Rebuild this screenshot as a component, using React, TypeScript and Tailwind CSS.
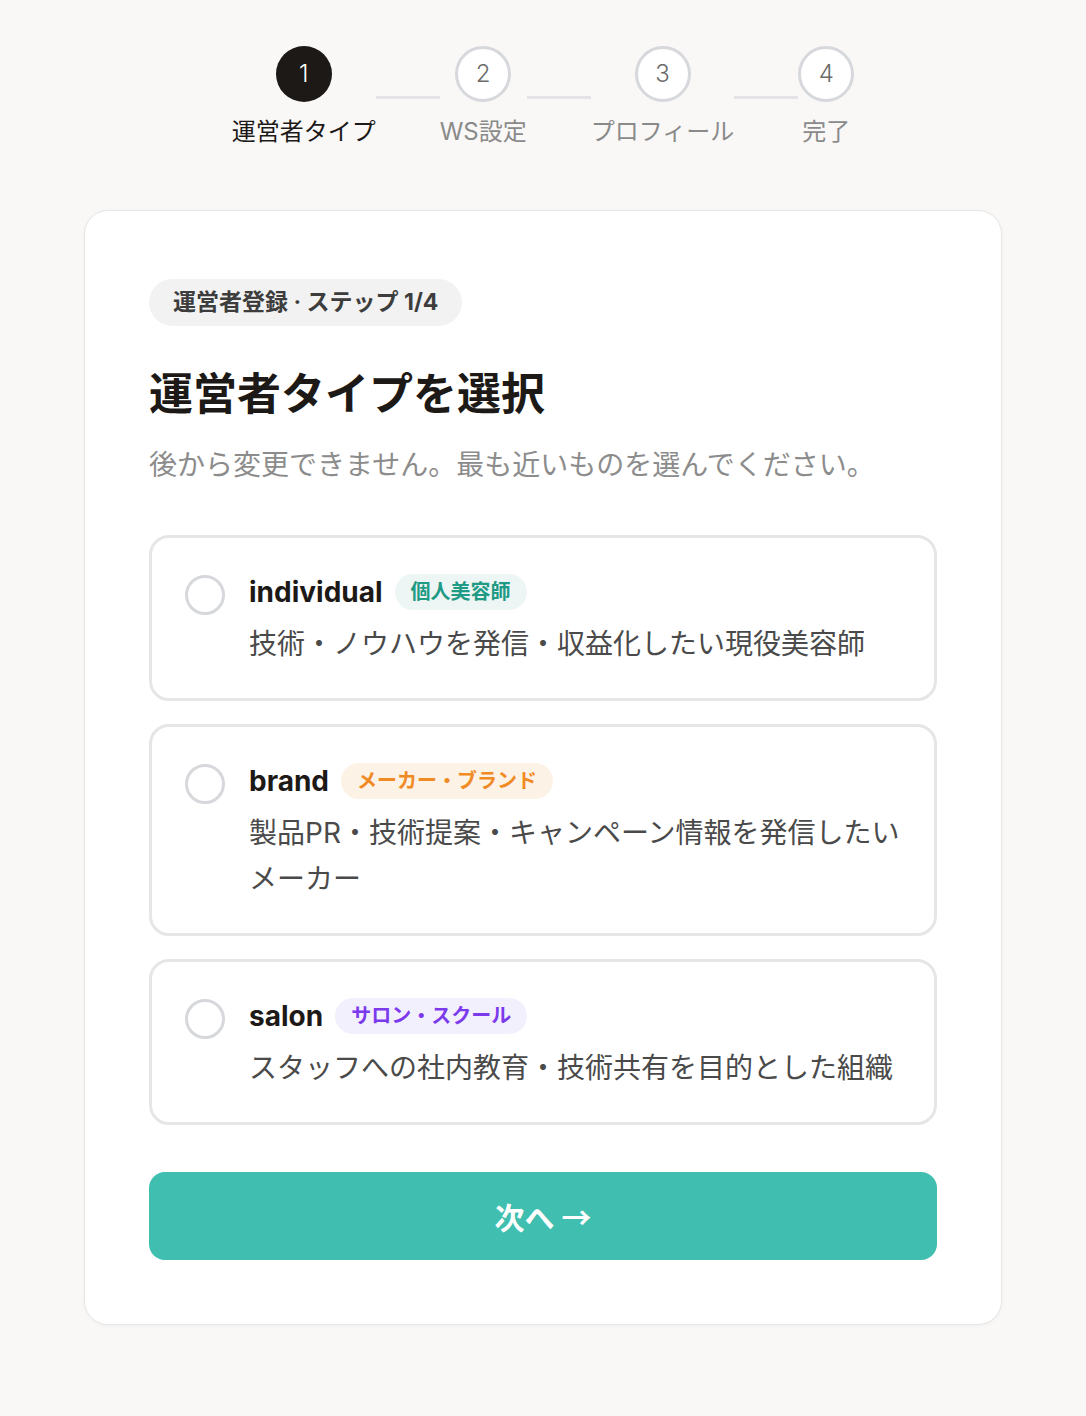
import { useState } from 'react';

const steps = [
  { n: 1, label: '運営者タイプ' },
  { n: 2, label: 'WS設定' },
  { n: 3, label: 'プロフィール' },
  { n: 4, label: '完了' },
];

const options = [
  {
    key: 'individual',
    badge: '個人美容師',
    badgeClass: 'bg-[#edf6f4] text-[#1f9a84]',
    desc: ['技術・ノウハウを発信・収益化したい現役美容師'],
  },
  {
    key: 'brand',
    badge: 'メーカー・ブランド',
    badgeClass: 'bg-[#fdf2e6] text-[#f08a24]',
    desc: ['製品PR・技術提案・キャンペーン情報を発信したい', 'メーカー'],
  },
  {
    key: 'salon',
    badge: 'サロン・スクール',
    badgeClass: 'bg-[#f3f0fe] text-[#7c3aed]',
    desc: ['スタッフへの社内教育・技術共有を目的とした組織'],
  },
];

function Stepper() {
  return (
    <div className="flex items-center justify-center">
      {steps.map((s, i) => (
        <div key={s.n} className="flex items-center">
          {i > 0 && <div className="h-[3px] w-16 bg-[#e4e4e6]" />}
          <div className="flex flex-col items-center gap-[14px]">
            {s.n === 1 ? (
              <div className="w-14 h-14 rounded-full bg-[#1c1917] text-white flex items-center justify-center text-[24px] font-light">
                {s.n}
              </div>
            ) : (
              <div className="w-14 h-14 rounded-full border-[3px] border-[#d6d8dc] bg-white text-[#6b6b6b] flex items-center justify-center text-[24px] font-light">
                {s.n}
              </div>
            )}
            <span
              className={
                s.n === 1
                  ? 'text-[24px] leading-8 text-[#1c1917]'
                  : 'text-[24px] leading-8 text-[#8a8a8a]'
              }
            >
              {s.label}
            </span>
          </div>
        </div>
      ))}
    </div>
  );
}

export default function App() {
  const [selected, setSelected] = useState<string | null>(null);

  return (
    <div
      className="min-h-screen bg-[#f9f8f7] pt-[46px] pb-[88px]"
      style={{ fontFamily: 'Inter, "Noto Sans CJK JP", sans-serif' }}
    >
      <Stepper />

      <div className="mx-auto mt-[62px] w-[918px] bg-white border border-[#e6e6e6] rounded-[24px] shadow-[0_1px_4px_rgba(0,0,0,0.04)] px-[64px] pt-[68px] pb-[64px]">
        <div className="inline-flex items-center h-[47px] px-6 rounded-full bg-[#f1f2f1] text-[23px] font-bold text-[#3d3d3d]">
          運営者登録 · ステップ 1/4
        </div>

        <h1 className="mt-[40px] text-[44px] leading-[56px] font-bold text-[#1c1917]">運営者タイプを選択</h1>
        <p className="mt-[23px] text-[28px] leading-[40px] text-[#8c8c8c]">
          後から変更できません。最も近いものを選んでください。
        </p>

        <div className="mt-[50px] flex flex-col gap-[23px]">
          {options.map((o) => (
            <button
              key={o.key}
              type="button"
              onClick={() => setSelected(o.key)}
              className={
                selected === o.key
                  ? 'flex items-start gap-[24px] text-left rounded-[20px] border-[3px] border-[#40bfb0] pl-[33px] pr-[30px] pt-[36px] pb-[31px]'
                  : 'flex items-start gap-[24px] text-left rounded-[20px] border-[3px] border-[#e6e6e6] pl-[33px] pr-[30px] pt-[36px] pb-[31px]'
              }
            >
              <span className="mt-[1px] shrink-0 w-10 h-10 rounded-full border-[3px] border-[#d6d8dc]" />
              <span className="flex flex-col gap-[11px]">
                <span className="flex items-center gap-[12px] h-9">
                  <span className="text-[28px] font-bold text-[#1c1917] leading-9">{o.key}</span>
                  <span className={`inline-flex items-center h-9 px-4 rounded-full text-[20px] font-bold ${o.badgeClass}`}>
                    {o.badge}
                  </span>
                </span>
                <span className="text-[28px] leading-[46px] text-[#4a4a4a]">
                  {o.desc.map((d, j) => (
                    <span key={j} className="inline-block">
                      {d}
                    </span>
                  ))}
                </span>
              </span>
            </button>
          ))}
        </div>

        <button
          type="button"
          className="mt-[47px] w-full h-[88px] rounded-[16px] bg-[#40bfb0] text-white text-[30px] font-bold flex items-center justify-center"
          style={{ fontFamily: '"Noto Sans CJK JP", sans-serif' }}
        >
          次へ →
        </button>
      </div>
    </div>
  );
}
